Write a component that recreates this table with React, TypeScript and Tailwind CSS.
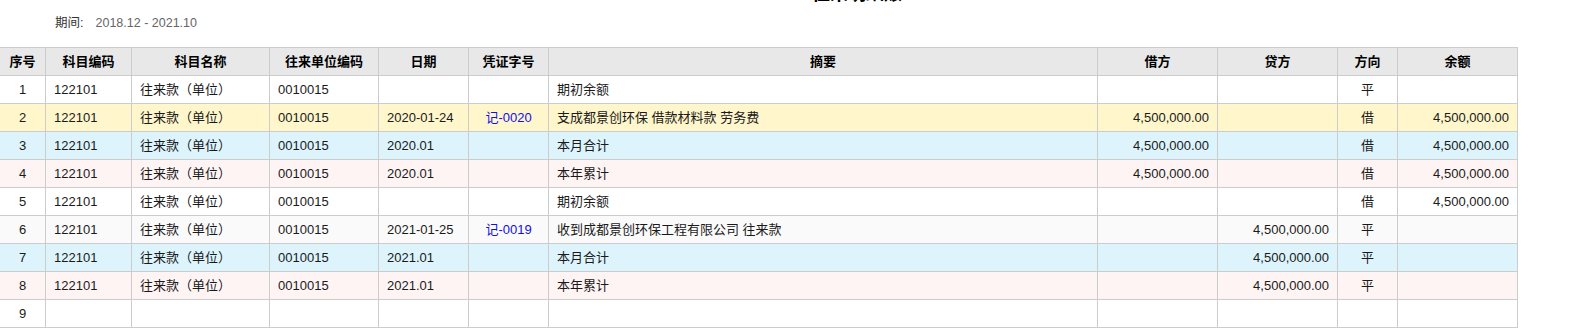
import React from "react";

const headers = ["序号", "科目编码", "科目名称", "往来单位编码", "日期", "凭证字号", "摘要", "借方", "贷方", "方向", "余额"];

const align = [
  "justify-center",
  "justify-start",
  "justify-start",
  "justify-start",
  "justify-start",
  "justify-center",
  "justify-start",
  "justify-end",
  "justify-end",
  "justify-center",
  "justify-end",
];

type Row = { bg: string; cells: string[] };

const A = "4,500,000.00";
const base = ["122101", "往来款（单位）", "0010015"];

const rows: Row[] = [
  { bg: "bg-white", cells: ["1", ...base, "", "", "期初余额", "", "", "平", ""] },
  { bg: "bg-[#fff6cc]", cells: ["2", ...base, "2020-01-24", "记-0020", "支成都景创环保 借款材料款 劳务费", A, "", "借", A] },
  { bg: "bg-[#ddf4fc]", cells: ["3", ...base, "2020.01", "", "本月合计", A, "", "借", A] },
  { bg: "bg-[#fff4f4]", cells: ["4", ...base, "2020.01", "", "本年累计", A, "", "借", A] },
  { bg: "bg-white", cells: ["5", ...base, "", "", "期初余额", "", "", "借", A] },
  { bg: "bg-[#fafafa]", cells: ["6", ...base, "2021-01-25", "记-0019", "收到成都景创环保工程有限公司 往来款", "", A, "平", ""] },
  { bg: "bg-[#ddf4fc]", cells: ["7", ...base, "2021.01", "", "本月合计", "", A, "平", ""] },
  { bg: "bg-[#fff4f4]", cells: ["8", ...base, "2021.01", "", "本年累计", "", A, "平", ""] },
  { bg: "bg-white", cells: ["9", "", "", "", "", "", "", "", "", "", ""] },
];

export default function App() {
  return (
    <div className="w-[1571px] h-[329px] overflow-hidden bg-white text-[#1a1a1a] font-['Liberation_Sans','Noto_Sans_CJK_SC',sans-serif]">
      <div className="h-[3px] overflow-hidden pl-[812px]">
        <div className="-mt-[16px] text-[18px] leading-[20px] font-bold text-black whitespace-nowrap">往来明细账</div>
      </div>
      <div className="h-[44px] pl-[55px] pt-[13px] text-[12.5px] leading-[15px] flex gap-[12px]">
        <span className="text-[#333]">期间:</span>
        <span className="text-[#666]">2018.12 - 2021.10</span>
      </div>
      <div className="grid w-[1518px] grid-cols-[46px_86px_138px_109px_90px_80px_549px_120px_120px_60px_120px] text-[13px]">
        {headers.map((h, i) => (
          <div
            key={"h" + i}
            className="h-[29px] border-t border-b border-r border-[#cccccc] bg-[#e8e8e8] flex items-center justify-center font-bold text-black"
          >
            {h}
          </div>
        ))}
        {rows.map((r, ri) =>
          r.cells.map((c, ci) => (
            <div
              key={ri + "-" + ci}
              className={`h-[28px] border-b border-r border-[#cccccc] flex items-center px-2 whitespace-nowrap ${r.bg} ${align[ci]} ${ci === 5 ? "text-[#1010ee]" : ""}`}
            >
              {c}
            </div>
          ))
        )}
      </div>
    </div>
  );
}
